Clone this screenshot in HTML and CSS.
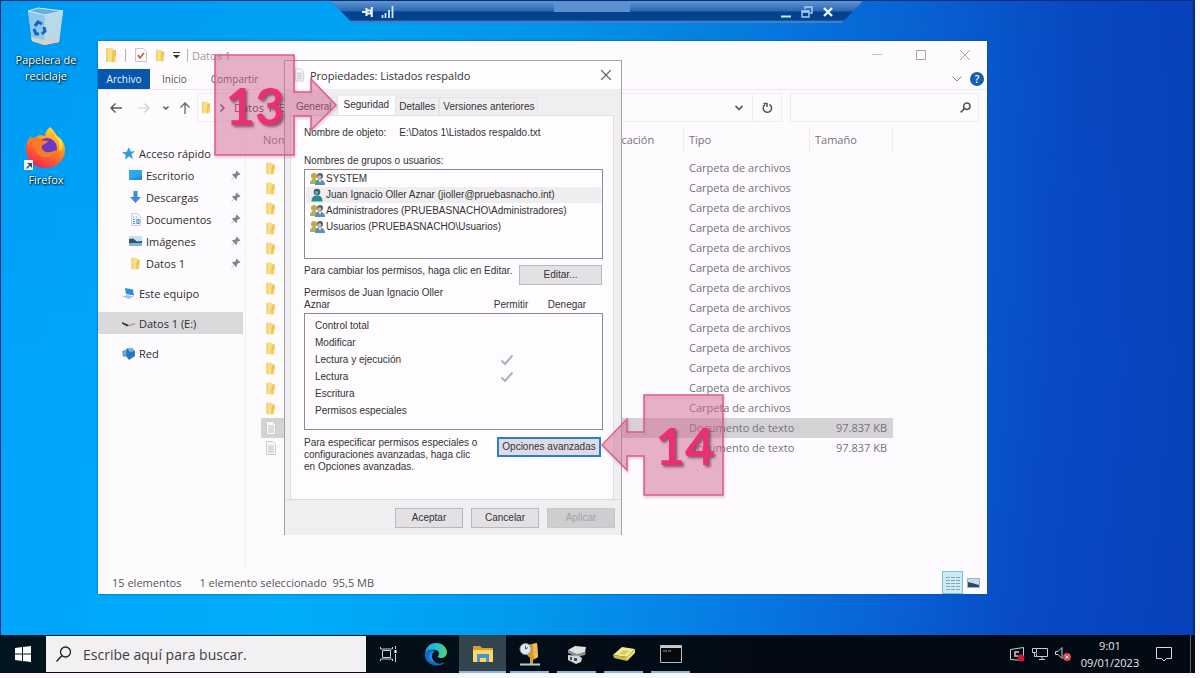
FILE: index.html
```html
<!DOCTYPE html>
<html lang="es">
<head>
<meta charset="utf-8">
<title>Propiedades: Listados respaldo</title>
<link rel="stylesheet" href="styles.css">
</head>
<body>
<svg class="defs" aria-hidden="true">
  <symbol id="folder" viewBox="0 0 12 16"><path d="M1 1h7v2h3v12H1z" fill="#f8df85"/><path d="M8 3h3v6l-2 1v5H7V9z" fill="#e9c456"/><path d="M1 1h2v14H1z" fill="#f3d26e"/></symbol>
  <symbol id="file" viewBox="0 0 12 14"><path d="M1.500.5h6l3 3v10h-9z" fill="#fafafa" stroke="#ccc"/><path d="M3 5h6M3 7h6M3 9h6M3 11h6" stroke="#b9bdc3"/></symbol>
  <symbol id="pin" viewBox="0 0 10 10"><path d="M5.500.5 9.500 4.500 8.500 5 7.500 4.900 6 6.500 6 8.500 5.200 9 3.300 7 .5 9.700.3 9.500 3 6.700 1.100 4.800 1.600 4 3.500 4 5.100 2.500 5 1.500z" fill="#7d8790"/></symbol>
  <symbol id="group" viewBox="0 0 15 14"><circle cx="4" cy="4" r="3" fill="#c9a54a"/><path d="M0 12c0-4 2-5 4-5s4 2 4 5z" fill="#a9b35a"/><circle cx="10" cy="4" r="3" fill="#4d6672"/><circle cx="9.500" cy="5" r="1.800" fill="#d9bb9b"/><path d="M5 13c0-4 2-5.500 4.500-5.500S15 9 15 13z" fill="#5b8fae"/><path d="M9 8l1 3 1-3z" fill="#fff"/></symbol>
  <symbol id="user" viewBox="0 0 15 14"><circle cx="7" cy="4" r="3.300" fill="#2d6675"/><circle cx="6.500" cy="4.800" r="1.800" fill="#79a4ae"/><path d="M1.500 13.500c0-5 2.500-6 5.500-6s5.500 1 5.500 6z" fill="#268a93"/></symbol>
  <symbol id="check" viewBox="0 0 14 12"><path d="M1.500 6.500 5 10 12.500 1.500" fill="none" stroke="#b2b0b4" stroke-width="2"/></symbol>
</svg>

<main class="desktop">
  <div class="shortcut bin">
    <svg width="38" height="40" viewBox="0 0 38 40"><path d="M1 4 11 1l25 3-4 31-15 3L5 34z" fill="#9dcdea"/><path d="M1 4 18 8 17 38 5 34z" fill="#8fc7ec"/><path d="M18 8 36 4 32 35 17 38z" fill="#b9d8e8"/><path d="M1 4 11 1l25 3-18 4z" fill="#5fb2dc" stroke="#cdebf8"/><path d="m4 30 13 3 15-3-.5 5L17 38 5 34z" fill="#d8cfc6"/><g fill="none" stroke="#1464b8" stroke-width="3"><path d="m8 19 3-4 4 2"/><path d="m7 22 2 5h3"/><path d="m17 20 1 4-3 3"/></g></svg>
    <span>Papelera de reciclaje</span>
  </div>
  <div class="shortcut firefox">
    <svg width="46" height="46" viewBox="0 0 46 46"><defs><linearGradient id="fx" x1="0.800" y1="0" x2="0.300" y2="1"><stop offset="0" stop-color="#ffe336"/><stop offset=".45" stop-color="#ff8c22"/><stop offset="1" stop-color="#f5204f"/></linearGradient></defs><path d="M27 1c4 3 5 6 7 9 5 3 8 8 8 14 0 11-9 18-20 18S3 34 3 23c0-6 2-9 5-13 0 2 1 3 2 4 2-2 4-4 7-5 2 0 3 1 5 1 0-4 2-6 5-9z" fill="url(#fx)"/><circle cx="24" cy="22" r="10" fill="#6c38c9"/><path d="M7 13c3-2 7-2 10 1l8 1c-1 3-5 3-6 5-1 3 2 7 7 6 4 0 6-2 8-2-2 7-9 9-14 7C12 29 13 21 7 13z" fill="#f87b25"/><path d="M27 1c4 8 11 13 9 24 4-2 4-6 3-10-2-4-9-7-12-14z" fill="#ffdc3a"/><path d="M1 34h9v10H1z" fill="#f6f7fa"/><path d="m3 42 3-3-2-2h5v5L7 40l-3 3z" fill="#244f9e"/></svg>
    <span>Firefox</span>
  </div>

  <header class="rdp">
    <span class="rdp-left">
      <svg width="12" height="10" viewBox="0 0 12 10"><path d="M0 5h4M4.500 1v8M5 3.500h4v3H5M9.800 0v10" fill="none" stroke="#e7f3ff" stroke-width="2"/></svg>
      <svg width="13" height="12" viewBox="0 0 13 12"><path d="M1.500 9v3M4.500 7v5M8 4v8M11.500 0v12" stroke="#cfe8ff" stroke-width="1.800"/></svg>
    </span>
    <span class="rdp-name"></span>
    <span class="rdp-right">
      <button aria-label="Minimizar"><svg width="10" height="12" viewBox="0 0 10 12"><path d="M0 10.500h10" stroke="#bfeaff" stroke-width="2"/></svg></button>
      <button aria-label="Restaurar"><svg width="12" height="12" viewBox="0 0 12 12"><path d="M4 3V1h7v6H9M1 5h7v6H1zM1 6h7" fill="none" stroke="#a5d2f5" stroke-width="1.400"/></svg></button>
      <button aria-label="Cerrar"><svg width="10" height="10" viewBox="0 0 10 10"><path d="m1 1 8 8M9 1 1 9" stroke="#e3f7ff" stroke-width="2.400"/></svg></button>
    </span>
  </header>

  <section class="explorer">
    <div class="titlebar">
      <svg width="14" height="16"><use href="#folder"/></svg><i></i>
      <svg class="tick" width="12" height="14" viewBox="0 0 12 14"><path d="M.5.5h8l3 3v10H.5z" fill="#faf8f9" stroke="#c9c5c8"/><path d="m3 7 2 3 4-5" fill="none" stroke="#b0604c" stroke-width="1.600"/></svg>
      <svg width="12" height="13"><use href="#folder"/></svg>
      <svg width="7" height="7" viewBox="0 0 7 7"><path d="M0 .5h7" stroke="#333"/><path d="M0 3h7L3.500 6.500z" fill="#333"/></svg><i></i>
      <span>Datos 1</span>
      <span class="winbtns">
        <button aria-label="Minimizar"><svg width="10" height="10"><path d="M0 4.500h10" stroke="#c4bfc2"/></svg></button>
        <button aria-label="Maximizar"><svg width="10" height="10"><path d="M.5.5h9v9h-9z" fill="none" stroke="#aaa5a8"/></svg></button>
        <button aria-label="Cerrar"><svg width="10" height="10"><path d="m0 0 10 10M10 0 0 10" stroke="#aaa5a8"/></svg></button>
      </span>
    </div>
    <nav class="ribbon">
      <button class="primary">Archivo</button><button>Inicio</button><button>Compartir</button><button>Vista</button>
      <span class="ribbon-end">
        <svg width="10" height="6"><path d="m.5.5 4.500 4.500L9.500.5" fill="none" stroke="#8b8689"/></svg>
        <button class="help" aria-label="Ayuda">?</button>
      </span>
    </nav>
    <div class="address">
      <div class="arrows">
        <svg width="12" height="10" viewBox="0 0 12 10"><path d="M12 5H1M5.500.5 1 5l4.500 4.500" fill="none" stroke="#555" stroke-width="1.400"/></svg>
        <svg width="12" height="10" viewBox="0 0 12 10"><path d="M0 5h11M6.500.5 11 5 6.500 9.500" fill="none" stroke="#d0cdd0" stroke-width="1.200"/></svg>
        <svg width="6" height="4"><path d="m.5.5 2.500 2.500L5.500.5" fill="none" stroke="#555" stroke-width="1.400"/></svg>
        <svg width="10" height="12" viewBox="0 0 10 12"><path d="M5 12V1M.5 5.500 5 1l4.500 4.500" fill="none" stroke="#666" stroke-width="1.300"/></svg>
      </div>
      <div class="path">
        <svg width="10" height="13"><use href="#folder"/></svg>
        <svg width="5" height="8"><path d="m.5.5 3.500 3.500L.5 7.500" fill="none" stroke="#444" stroke-width="1.400"/></svg>
        <span>Datos 1 (E:)</span>
        <svg class="drop" width="8" height="6"><path d="m.5 1 3.500 3.500L7.500 1" fill="none" stroke="#666" stroke-width="1.800"/></svg>
        <button class="refresh" aria-label="Actualizar"><svg width="11" height="12" viewBox="0 0 11 12"><path d="M7.500 2.500A4.200 4.200 0 1 1 3 2.700M1.500 1.500h3.500V5" fill="none" stroke="#555" stroke-width="1.500"/></svg></button>
      </div>
      <label class="find"><input type="search" aria-label="Buscar en Datos 1"><svg width="11" height="11" viewBox="0 0 11 11"><circle cx="6.800" cy="4.200" r="3.200" fill="none" stroke="#555" stroke-width="1.500"/><path d="M4.500 6.500.7 10.300" stroke="#555" stroke-width="1.700"/></svg></label>
    </div>
    <div class="content">
      <nav class="tree">
        <ul>
          <li><svg width="13" height="13" viewBox="0 0 13 13"><path d="m7 0 1.500 4.500L13 4.200 9.500 7.300 11 12 7 9.500 3 12.500 3.800 8 0 5.500l4.700-.7z" fill="#2f9be0"/></svg>Acceso rápido</li>
          <li class="sub"><svg width="13" height="11"><path d="M0 0h13v10H0z" fill="#1b92de"/><path d="M0 0h13v5L0 10z" fill="#34a5ea"/></svg>Escritorio<svg class="pin" width="10" height="10"><use href="#pin"/></svg></li>
          <li class="sub"><svg width="13" height="12"><path d="M4.500 0h4v6H12l-5.500 6L1 6h3.500z" fill="#3d8ad6"/></svg>Descargas<svg class="pin" width="10" height="10"><use href="#pin"/></svg></li>
          <li class="sub"><svg width="13" height="13"><path d="M2.500.5h6l3 3v9h-9z" fill="#f5f8fb" stroke="#c8d2db"/><path d="M4 4h1M7 4h1M4 6.500h2M4 8.500h2M4 10.500h2M8 6.500h2v4H8z" stroke="#5a92c8" stroke-width="1.200" fill="none"/></svg>Documentos<svg class="pin" width="10" height="10"><use href="#pin"/></svg></li>
          <li class="sub"><svg width="13" height="10"><path d="M0 0h13v10H0z" fill="#c4e1f4"/><path d="M0 3 4 2.500l4 3 5-.5v2H0z" fill="#33516d"/><path d="M0 7h13v3H0z" fill="#7fb4de"/></svg>Imágenes<svg class="pin" width="10" height="10"><use href="#pin"/></svg></li>
          <li class="sub"><svg width="13" height="13"><use href="#folder"/></svg>Datos 1<svg class="pin" width="10" height="10"><use href="#pin"/></svg></li>
        </ul>
        <ul>
          <li><svg width="13" height="13"><path d="m3 1 8 1.500 1 6L4 7z" fill="#2790da"/><path d="M0 9.500 5 8l7 1.500L7 12z" fill="#a9c4d8"/></svg>Este equipo</li>
        </ul>
        <ul>
          <li class="current"><svg width="13" height="8"><path d="m0 3 7 3-2 1.500L0 4.500z" fill="#333"/><path d="m7 6 6-2v1.500L6 7.500z" fill="#999"/></svg>Datos 1 (E:)</li>
        </ul>
        <ul>
          <li><svg width="13" height="13"><path d="m0 4 5-2 1 7-5 1z" fill="#62a9d8"/><path d="m5 1 5 0 3 3v5l-6 4-3-4z" fill="#2478bd"/><path d="m5 1 5 0 3 3-5 1z" fill="#6bb7e8"/></svg>Red</li>
        </ul>
      </nav>
      <div class="files">
        <table>
          <colgroup><col><col class="c-date"><col class="c-type"><col class="c-size"></colgroup>
          <thead><tr><th class="first"><span>Nombre</span></th><th><span>Fecha de modificación</span></th><th><span>Tipo</span></th><th><span class="last">Tamaño</span></th></tr></thead>
          <tbody>
            <tr><td><svg width="11" height="13"><use href="#folder"/></svg></td><td></td><td>Carpeta de archivos</td><td></td></tr>
            <tr><td><svg width="11" height="13"><use href="#folder"/></svg></td><td></td><td>Carpeta de archivos</td><td></td></tr>
            <tr><td><svg width="11" height="13"><use href="#folder"/></svg></td><td></td><td>Carpeta de archivos</td><td></td></tr>
            <tr><td><svg width="11" height="13"><use href="#folder"/></svg></td><td></td><td>Carpeta de archivos</td><td></td></tr>
            <tr><td><svg width="11" height="13"><use href="#folder"/></svg></td><td></td><td>Carpeta de archivos</td><td></td></tr>
            <tr><td><svg width="11" height="13"><use href="#folder"/></svg></td><td></td><td>Carpeta de archivos</td><td></td></tr>
            <tr><td><svg width="11" height="13"><use href="#folder"/></svg></td><td></td><td>Carpeta de archivos</td><td></td></tr>
            <tr><td><svg width="11" height="13"><use href="#folder"/></svg></td><td></td><td>Carpeta de archivos</td><td></td></tr>
            <tr><td><svg width="11" height="13"><use href="#folder"/></svg></td><td></td><td>Carpeta de archivos</td><td></td></tr>
            <tr><td><svg width="11" height="13"><use href="#folder"/></svg></td><td></td><td>Carpeta de archivos</td><td></td></tr>
            <tr><td><svg width="11" height="13"><use href="#folder"/></svg></td><td></td><td>Carpeta de archivos</td><td></td></tr>
            <tr><td><svg width="11" height="13"><use href="#folder"/></svg></td><td></td><td>Carpeta de archivos</td><td></td></tr>
            <tr><td><svg width="11" height="13"><use href="#folder"/></svg></td><td></td><td>Carpeta de archivos</td><td></td></tr>
            <tr class="selected"><td><svg width="12" height="14"><use href="#file"/></svg></td><td></td><td>Documento de texto</td><td>97.837 KB</td></tr>
            <tr><td><svg width="12" height="14"><use href="#file"/></svg></td><td></td><td>Documento de texto</td><td>97.837 KB</td></tr>
          </tbody>
        </table>
      </div>
    </div>
    <footer class="status">
      <span>15 elementos</span><span class="sel">1 elemento seleccionado&nbsp; 95,5 MB</span>
      <span class="views">
        <button class="on" aria-label="Detalles"><svg width="14" height="14"><path d="M0 1.500h4M0 4.500h4M0 7.500h4M0 10.500h4M0 13.500h4M5 1.500h4M5 4.500h4M5 7.500h4M5 10.500h4M5 13.500h4M10 1.500h4M10 4.500h4M10 7.500h4M10 10.500h4M10 13.500h4" stroke="#8aa0ac"/></svg></button>
        <button aria-label="Iconos grandes"><svg width="13" height="10"><path d="M.5.5h12v9H.5z" fill="#c3dcf5" stroke="#9fb2c4"/><path d="m1 4 4 1 7 2v2H1z" fill="#33475a"/></svg></button>
      </span>
    </footer>
  </section>

  <section class="dialog" role="dialog" aria-label="Propiedades">
    <div class="dlg-title">
      <svg width="11" height="14"><use href="#file"/></svg><h1>Propiedades: Listados respaldo</h1>
      <button aria-label="Cerrar"><svg width="10" height="10"><path d="m0 0 10 10M10 0 0 10" stroke="#555" stroke-width="1.200"/></svg></button>
    </div>
    <div class="dlg-body">
      <div class="tabs" role="tablist">
        <button role="tab">General</button><button role="tab" class="active" aria-selected="true">Seguridad</button><button role="tab">Detalles</button><button role="tab">Versiones anteriores</button>
      </div>
      <div class="page">
        <p class="object"><span>Nombre de objeto:</span><span>E:\Datos 1\Listados respaldo.txt</span></p>
        <p class="caption">Nombres de grupos o usuarios:</p>
        <ul class="users">
          <li><svg width="15" height="14"><use href="#group"/></svg>SYSTEM</li>
          <li class="picked"><svg width="15" height="14"><use href="#user"/></svg>Juan Ignacio Oller Aznar (jioller@pruebasnacho.int)</li>
          <li><svg width="15" height="14"><use href="#group"/></svg>Administradores (PRUEBASNACHO\Administradores)</li>
          <li><svg width="15" height="14"><use href="#group"/></svg>Usuarios (PRUEBASNACHO\Usuarios)</li>
        </ul>
        <div class="row edit"><p>Para cambiar los permisos, haga clic en Editar.</p><button class="btn">Editar...</button></div>
        <div class="perm-head"><p>Permisos de Juan Ignacio Oller Aznar</p><span>Permitir</span><span>Denegar</span></div>
        <div class="perms">
          <table>
            <tbody>
              <tr><td>Control total</td><td></td><td></td></tr>
              <tr><td>Modificar</td><td></td><td></td></tr>
              <tr><td>Lectura y ejecución</td><td><svg width="14" height="12" role="img" aria-label="Sí"><use href="#check"/></svg></td><td></td></tr>
              <tr><td>Lectura</td><td><svg width="14" height="12" role="img" aria-label="Sí"><use href="#check"/></svg></td><td></td></tr>
              <tr><td>Escritura</td><td></td><td></td></tr>
              <tr><td>Permisos especiales</td><td></td><td></td></tr>
            </tbody>
          </table>
        </div>
        <div class="row advanced"><p>Para especificar permisos especiales o configuraciones avanzadas, haga clic en Opciones avanzadas.</p><button class="btn focus">Opciones avanzadas</button></div>
      </div>
    </div>
    <div class="dlg-actions"><button class="btn">Aceptar</button><button class="btn">Cancelar</button><button class="btn" disabled>Aplicar</button></div>
  </section>

  <svg class="callout thirteen" width="126" height="106" viewBox="0 0 126 106"><path d="M2 2h79v37h17V26l25 26-25 25V63H81v39H2z"/><text x="42" y="72">13</text></svg>
  <svg class="callout fourteen" width="126" height="106" viewBox="0 0 126 106"><path d="M122 2H43v37H26V26L1 52l25 25V63h17v39h79z"/><text x="84" y="72">14</text></svg>
</main>

<footer class="taskbar">
  <button class="start" aria-label="Inicio"><svg width="16" height="16"><path d="m0 2 7-1v6.500H0zM8 1l8-1v7.500H8zM0 8.500h7V15l-7-1zM8 8.500h8V16l-8-1z" fill="#fff"/></svg></button>
  <label class="search"><svg width="16" height="17" viewBox="0 0 16 17"><circle cx="9.500" cy="6" r="5" fill="none" stroke="#222" stroke-width="1.300"/><path d="M6 9.500.5 15.500" stroke="#222" stroke-width="1.400"/></svg><input type="text" placeholder="Escribe aquí para buscar." aria-label="Buscar"></label>
  <nav class="apps">
    <button aria-label="Vista de tareas"><svg width="17" height="16"><path d="M2.500 4.500h8v7h-8zM.5 1v2h12V1M.5 15v-2h12v2M15.500 0v3M15.500 8v8" fill="none" stroke="#c8d0d4"/><path d="M15.500 4v3" stroke="#fff" stroke-width="2"/></svg></button>
    <button aria-label="Edge"><svg width="24" height="24" viewBox="0 0 24 24"><defs><linearGradient id="eg"><stop offset="0" stop-color="#1a9fe8"/><stop offset=".6" stop-color="#27c4c8"/><stop offset="1" stop-color="#5fd35a"/></linearGradient></defs><path d="M1 11C2 4 7 1 12 1c7 0 11 5 11 9 0 4-3 6-6 6-2 0-4-1-3-2 2-2 1-6-3-6-4-1-8 0-10 3z" fill="url(#eg)"/><path d="M1 11c2-3 7-4 10-2-4 1-5 8 0 11 4 3 8 1 10 0-3 4-8 4-11 3C4 22 0 17 1 11z" fill="#1269c4"/><path d="M11 9c-4 2-4 8 0 11-4 0-7-3-6-7 1-3 4-4 6-4z" fill="#1c8ae0"/></svg></button>
    <button class="run current" aria-label="Explorador"><svg width="22" height="18"><path d="M1 1h7l2 2h11v14H1z" fill="#dd9d28"/><path d="M1 5h20v12H1z" fill="#fbd767"/><path d="M5 17V9h12v8h-3v-4H8v4z" fill="#4a94cd"/></svg></button>
    <button class="run" aria-label="Copias de seguridad"><svg width="22" height="24"><path d="M8 3 18 1l1 14-5 3v4h-3v-6l-3-3z" fill="#d99a2c"/><path d="m14 2 4-1 1 14-4 2z" fill="#f0bd51"/><circle cx="6.500" cy="7" r="5.500" fill="#dfe9ee" stroke="#8b9ba4"/><path d="M6.500 3.500V7L9 5.500" fill="none" stroke="#456"/><path d="M1 22.500h20" stroke="#bccad0" stroke-width="2"/></svg></button>
    <button class="run" aria-label="Servidor"><svg width="22" height="20"><path d="M2 6 9 2l11 1-1 5-8 3z" fill="#e0e2e2"/><path d="m2 6 9 4 9-2-1 3-8 2-9-4z" fill="#8b9295"/><path d="m2 11 11 1 3 2-1 4-5 2-8-4z" fill="#d4d8d9"/><path d="M4 13h2v3H4zM8 14h3v3H8z" fill="#4b5054"/></svg></button>
    <button class="run" aria-label="Unidad"><svg width="24" height="17"><path d="m1 9 9-8 13 2-8 8z" fill="#f6eb98"/><path d="m1 9 14 2v4L2 12z" fill="#c9b84f"/><path d="m15 11 8-8v4l-8 8z" fill="#e6d778"/><path d="m6 8 6-4 6 1-5 4z" fill="#dccd6c"/></svg></button>
    <button class="run" aria-label="Consola"><svg width="22" height="18"><path d="M.5.5h21v17H.5z" fill="#07090c" stroke="#b5bcc0"/><path d="M1 2h20" stroke="#c7cbd0" stroke-width="2"/><path d="M3 6h4M8 6h3" stroke="#9aa0a5"/></svg></button>
  </nav>
  <div class="tray">
    <svg width="17" height="17"><path d="m1.500 3.500 13-2v13l-13-1z" fill="none" stroke="#c8ccd0"/><path d="M10 6H6v4h3" fill="none" stroke="#c8ccd0" stroke-width="1.500"/><circle cx="12" cy="12" r="3.500" fill="#d01530"/></svg>
    <svg width="17" height="14"><path d="M4.500 1.500h11v8h-11v-3M.5 1.500h4v4h-4zM2.500 5.500v4h2M10 10v2M7 12.500h6" fill="none" stroke="#c8ccd0"/></svg>
    <svg width="17" height="14"><path d="M.5 4.500H3l4-4v11l-4-4H.5z" fill="none" stroke="#c8ccd0"/><circle cx="12" cy="10" r="4" fill="#e04455"/><path d="m10.500 8.500 3 3M13.500 8.500l-3 3" stroke="#fff"/></svg>
    <time class="clock"><span>9:01</span><span>09/01/2023</span></time>
    <button aria-label="Notificaciones"><svg width="16" height="16"><path d="M.5 1.500h15v11h-5L8 15l-2.500-2.500h-5z" fill="none" stroke="#d8dbde"/></svg></button>
    <i class="peek"></i>
  </div>
</footer>
</body>
</html>
```

FILE: styles.css
```css
* { box-sizing: border-box; }
html, body { height: 100%; }
body {
  margin: 0;
  padding: 0 5px 5px 0;
  display: flex;
  flex-direction: column;
  background: #fcf8fc;
  font-family: "Open Sans", "Noto Sans", sans-serif;
  font-size: 11px;
  color: #333;
  overflow: hidden;
}
button { font: inherit; color: inherit; border: 0; background: none; padding: 0; }
ul, p, h1 { margin: 0; padding: 0; list-style: none; font-weight: normal; }
svg { flex: none; display: block; }
input { font: inherit; border: 0; background: none; outline: 0; min-width: 0; padding: 0; }
.defs { display: none; }

.desktop {
  position: relative;
  flex: 1;
  min-height: 0;
  overflow: hidden;
  border: solid #062f78;
  border-width: 1px 2px 0 1px;
  background:
    linear-gradient(to bottom, rgba(0, 30, 140, .08), rgba(0, 30, 140, 0) 60%),
    linear-gradient(96deg, #00a4fb 0, #00adfb 28%, #019bee 46%, #0681e6 60%, #0961d4 76%, #084bc5 86%, #0640ba 100%);
}

/* Desktop shortcuts */
.shortcut {
  position: absolute;
  left: 5px;
  width: 80px;
  display: flex;
  flex-direction: column;
  align-items: center;
  gap: 5px;
  color: #fff;
  line-height: 16px;
  text-align: center;
  text-shadow: 1px 1px 2px #000, 0 0 2px #023;
}
.bin { top: 6px; }
.firefox { top: 125px; gap: 0; }

/* Remote session bar */
.rdp {
  position: absolute;
  top: 0;
  left: 330px;
  width: 532px;
  height: 22px;
  padding: 0 30px 0 31px;
  display: flex;
  justify-content: space-between;
  align-items: center;
  background: linear-gradient(#6096d0, #2a68b4 45%, #073f8d 50%, #05448f 88%, #3b80c8 90%);
  clip-path: polygon(0 0, 100% 0, 96% 100%, 4% 100%);
}
.rdp-left, .rdp-right { display: flex; align-items: center; gap: 7px; }
.rdp-right { gap: 10px; }
.rdp-name { width: 76px; height: 11px; margin: 0 0 11px 8px; background: #5b91d0; }

/* Explorer window */
.explorer {
  position: absolute;
  inset: 40px 206px 41px 97px;
  display: flex;
  flex-direction: column;
  background: #fefbfe;
  box-shadow: 0 0 2px #04518f;
}
.titlebar { height: 28px; display: flex; align-items: center; gap: 7px; padding-left: 6px; color: #999; }
.titlebar i { width: 1px; height: 13px; background: #b5b1b5; }
.titlebar .tick { margin-left: 2px; }
.titlebar i + span { margin-left: -3px; }
.winbtns { margin-left: auto; display: flex; }
.winbtns button { width: 44px; display: flex; justify-content: center; }
.ribbon { height: 21px; display: flex; border-bottom: 1px solid #ebe7ec; color: #555; font-size: 10px; }
.ribbon button { padding: 0 12px; }
.ribbon button.primary { width: 52px; padding: 0; background: #0658ae; color: #e8f2ff; }
.ribbon button:nth-of-type(3) { padding: 0 24px 0 12px; }
.ribbon-end { margin-left: auto; display: flex; align-items: center; gap: 8px; padding-right: 3px; }
.ribbon .ribbon-end .help { width: 14px; height: 14px; padding: 0; border-radius: 50%; background: #1360ae; color: #fff; line-height: 14px; font-weight: 600; }
.address { display: flex; padding: 3px 8px 4px 12px; gap: 8px; }
.arrows { display: flex; align-items: center; gap: 13px; width: 79px; }
.arrows svg:nth-child(2) { margin-left: 3px; }
.arrows svg:nth-child(4) { margin-left: -2px; }
.path { flex: 1; display: flex; align-items: center; gap: 9px; padding-left: 3px; border: 1px solid #f0edf1; height: 29px; }
.drop { margin-left: auto; }
.refresh { width: 29px; height: 27px; display: flex; align-items: center; justify-content: center; border-left: 1px solid #f0edf1; }
.find { width: 189px; height: 29px; border: 1px solid #f0edf1; display: flex; align-items: center; padding-right: 7px; }
.find input { flex: 1; }
.content { flex: 1; min-height: 0; display: flex; }
.tree { width: 148px; padding: 16px 2px 0 0; border-right: 1px solid #f4f1f5; display: flex; flex-direction: column; gap: 8px; color: #2d2d2d; }
.tree li { height: 22px; display: flex; align-items: center; gap: 4px; padding-left: 24px; }
.tree .sub { padding: 0 2px 0 31px; }
.tree .pin { margin-left: auto; }
.tree .current { background: #dbd8dc; }
.files { flex: 1; padding: 0 94px 0 15px; color: #75727a; }
.files table { width: 100%; table-layout: fixed; border-collapse: collapse; }
.c-date { width: 149px; }
.c-type { width: 126px; }
.c-size { width: 84px; }
.files th { padding: 0 0 5px; font-weight: normal; text-align: left; white-space: nowrap; }
.files th span { display: block; height: 27px; padding-left: 5px; line-height: 27px; border-left: 1px solid #f0edf1; }
.files th.first span { border: 0; padding-left: 2px; }
.files th span.last { border-right: 1px solid #f0edf1; }
.files td { height: 20px; padding: 0 6px; line-height: 18px; white-space: nowrap; }
.files td:first-child { padding: 0 4px; }
.files td:last-child { text-align: right; }
.files .selected { background: #d5d2d6; }
.status { height: 23px; display: flex; align-items: center; padding: 0 7px 0 14px; color: #555; }
.status .sel { margin-left: 18px; }
.views { margin-left: auto; display: flex; align-items: center; gap: 4px; }
.views button { display: flex; }
.views .on { width: 21px; height: 23px; align-items: center; justify-content: center; background: #cdebf7; border: 1px solid #7cbdd8; }

/* Properties dialog */
.dialog {
  position: absolute;
  left: 283px;
  top: 59px;
  width: 338px;
  background: #fefcfe;
  border: 1px solid #a5a2a6;
  border-bottom: 0;
  font-family: "Liberation Sans", Arial, sans-serif;
  font-size: 10px;
  line-height: 12px;
  color: #333;
}
.dlg-title { height: 28px; display: flex; align-items: center; gap: 5px; padding: 0 10px 0 9px; }
.dlg-title h1 { font: 11px "Open Sans", "Noto Sans", sans-serif; flex: 1; }
.dlg-body { background: #f0eef1; padding: 7px 7px 0 5px; border-bottom: 1px solid #dcd9dc; }
.tabs { display: flex; align-items: flex-end; height: 19px; }
.tabs button { height: 18px; padding: 0 3px; border: 1px solid #e5e2e5; border-bottom: 0; }
.tabs .active { height: 19px; padding: 0 5px 3px; background: #fefcfe; border-color: #fefcfe; }
.tabs button:first-child { padding: 0 5px; }
.page { background: #fefcfe; border: 1px solid #e2dfe2; border-bottom: 0; padding: 11px 10px 26px 13px; }
.object { display: flex; gap: 13px; }
.caption { margin: 16px 0 2px; }
.users { height: 90px; border: 1px solid #8c8a8e; padding: 1px; }
.users li { height: 16px; display: flex; align-items: center; gap: 1px; padding-left: 4px; white-space: nowrap; }
.users .picked { background: #f0edf1; }
.row { display: flex; justify-content: space-between; }
.btn { height: 20px; border: 1px solid #bab8bc; background: #e3e1e4; }
.edit { margin-top: 6px; }
.edit .btn { width: 83px; margin-right: 1px; }
.perm-head { display: flex; align-items: flex-end; margin: 2px 0; }
.perm-head p { width: 150px; margin-right: 29px; }
.perm-head span { width: 56px; text-align: center; }
.perms { border: 1px solid #8c8a8e; height: 117px; padding: 3px 0 0 10px; }
.perms table { border-collapse: collapse; }
.perms td { height: 17px; padding: 0; width: 60px; }
.perms td:first-child { width: 180px; }
.perms td svg { margin-left: 13px; }
.advanced { margin-top: 7px; }
.advanced p { width: 180px; }
.advanced .btn { margin-right: 2px; }
.btn.focus { width: 104px; border: 2px solid #2b7fc9; background: #dedbe7; white-space: nowrap; }
.dlg-actions { display: flex; justify-content: flex-end; gap: 8px; padding: 8px 6px 7px; background: #f0eef1; }
.dlg-actions .btn { width: 68px; }
.btn:disabled { color: #a5a3a7; background: #cfcdd0; border-color: #c8c6c9; }

/* Step callouts */
.callout { position: absolute; filter: drop-shadow(1px 2px 1px rgba(90, 40, 60, .25)); }
.callout path { fill: rgba(224, 112, 158, .44); stroke: #df5a8c; stroke-width: 1.5; }
.callout text { font: bold 51px Lato, sans-serif; fill: #ee2e74; text-anchor: middle; filter: drop-shadow(2px 2px 1px rgba(70, 50, 60, .6)); }
.thirteen { left: 212px; top: 52px; }
.fourteen { left: 600px; top: 392px; }

/* Taskbar */
.taskbar { height: 38px; display: flex; background: linear-gradient(90deg, #02141d, #020a14 70%); color: #e6e8ea; }
.start { width: 46px; display: flex; align-items: center; justify-content: center; }
.search { width: 320px; margin: 1px 0; display: flex; align-items: center; gap: 11px; padding-left: 10px; background: #f3f0f3; }
.search input { flex: 1; font-size: 14px; }
.search input::placeholder { color: #3f3d40; opacity: 1; }
.apps { display: flex; margin-left: -1px; }
.apps button { width: 47px; display: flex; align-items: center; justify-content: center; position: relative; }
.apps .run::after { content: ""; position: absolute; left: 4px; right: 4px; bottom: 0; height: 2px; background: #86b9dd; }
.apps .current { background: #34444e; }
.apps .current::after { left: 0; right: 0; }
.tray { margin-left: auto; display: flex; align-items: center; gap: 6px; padding-right: 4px; }
.clock { display: flex; flex-direction: column; align-items: center; width: 60px; line-height: 17px; margin: 0 10px 0 2px; }
.peek { width: 1px; height: 100%; background: #5c6268; margin-left: 12px; }
```
